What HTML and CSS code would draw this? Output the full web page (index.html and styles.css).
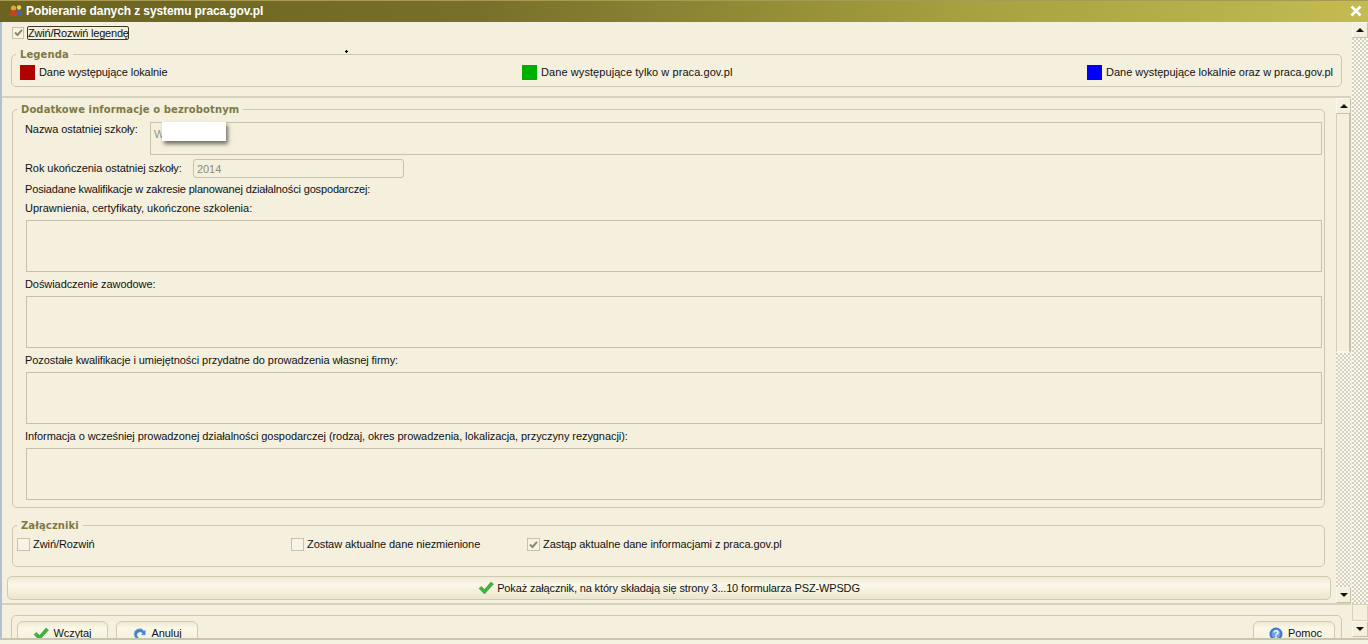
FILE: index.html
```html
<!DOCTYPE html>
<html lang="pl">
<head>
<meta charset="utf-8">
<title>Pobieranie danych z systemu praca.gov.pl</title>
<link rel="stylesheet" href="styles.css">
</head>
<body>
<div class="window">
  <header class="titlebar">
    <svg class="app-icon" width="14" height="14" viewBox="0 0 14 14"><circle cx="4.500" cy="4" r="2.600" fill="#e8a23a"/><path d="M1 12c0-4 1-5.500 3.500-5.500S8.500 8 8.500 12z" fill="#c8401c"/><circle cx="10" cy="3.500" r="2.200" fill="#f0c84a"/><path d="M7.500 12c0-4 .8-6 2.800-6S13 8 13 12z" fill="#4a62a8"/></svg>
    <span class="title">Pobieranie danych z systemu praca.gov.pl</span>
    <svg class="close" width="12" height="12" viewBox="0 0 12 12"><path d="M1.500 1.500l9 9M10.500 1.500l-9 9" stroke="#fff" stroke-width="2.600"/></svg>
  </header>
  <div class="frame">
    <main class="content">
      <div class="toggle-row">
        <span class="check on"><svg width="9" height="9" viewBox="0 0 9 9"><path d="M1 4.500l2.500 2.500L8 1.800" fill="none" stroke="#8c8a5e" stroke-width="2"/></svg></span>
        <span class="focus-label">Zwiń/Rozwiń legendę</span>
      </div>
      <fieldset class="group legend-box">
        <legend>Legenda</legend>
        <div class="legend-items">
          <span class="legend-item"><i class="swatch red"></i>Dane występujące lokalnie</span>
          <span class="legend-item wide"><i class="swatch green"></i>Dane występujące tylko w praca.gov.pl</span>
          <span class="legend-item semi"><i class="swatch blue"></i>Dane występujące lokalnie oraz w praca.gov.pl</span>
        </div>
      </fieldset>
      <section class="panel">
        <div class="panel-body">
          <fieldset class="group info">
            <legend>Dodatkowe informacje o bezrobotnym</legend>
            <div class="school-row">
              <label class="school-label">Nazwa ostatniej szkoły:</label>
              <div class="field school"><span class="ghost">W</span><span class="redact"></span></div>
            </div>
            <div class="year-row">
              <label>Rok ukończenia ostatniej szkoły:</label>
              <div class="field year">2014</div>
            </div>
            <p class="line first">Posiadane kwalifikacje w zakresie planowanej działalności gospodarczej:</p>
            <p class="line second">Uprawnienia, certyfikaty, ukończone szkolenia:</p>
            <div class="field area"></div>
            <p class="line">Doświadczenie zawodowe:</p>
            <div class="field area"></div>
            <p class="line">Pozostałe kwalifikacje i umiejętności przydatne do prowadzenia własnej firmy:</p>
            <div class="field area"></div>
            <p class="line">Informacja o wcześniej prowadzonej działalności gospodarczej (rodzaj, okres prowadzenia, lokalizacja, przyczyny rezygnacji):</p>
            <div class="field area"></div>
          </fieldset>
          <fieldset class="group attach">
            <legend>Załączniki</legend>
            <div class="attach-row">
              <span class="opt o1"><span class="check"></span>Zwiń/Rozwiń</span>
              <span class="opt o2"><span class="check"></span>Zostaw aktualne dane niezmienione</span>
              <span class="opt"><span class="check on"><svg width="9" height="9" viewBox="0 0 9 9"><path d="M1 4.500l2.500 2.500L8 1.800" fill="none" stroke="#8c8a5e" stroke-width="2"/></svg></span>Zastąp aktualne dane informacjami z praca.gov.pl</span>
            </div>
          </fieldset>
          <div class="showbar">
            <svg width="16" height="14" viewBox="0 0 16 14"><path d="M1 7.500l2.500-2 3 3L13 1l2.500 2-9 10z" fill="#3fb53a" stroke="#2c8f2c" stroke-width=".5"/></svg>
            <span>Pokaż załącznik, na który składają się strony 3...10 formularza PSZ-WPSDG</span>
          </div>
        </div>
        <div class="scroll inner">
          <div class="sbtn"><i class="up"></i></div>
          <div class="thumb"></div>
          <div class="track"></div>
          <div class="sbtn"><i class="down"></i></div>
        </div>
      </section>
      <fieldset class="group buttons">
        <button class="btn b1"><svg width="16" height="14" viewBox="0 0 16 14"><path d="M1 7.500l2.500-2 3 3L13 1l2.500 2-9 10z" fill="#3fb53a" stroke="#2c8f2c" stroke-width=".5"/></svg>Wczytaj</button>
        <button class="btn b2"><svg width="15" height="14" viewBox="0 0 15 14"><path d="M2 7a5.500 5.500 0 0 1 10-3l1.500-1v5H9l1.500-1.500A3 3 0 0 0 5 8l2 4C4 12 2 10 2 7z" fill="#3f82d0" stroke="#a8c4e8" stroke-width=".6"/></svg>Anuluj</button>
        <span class="spacer"></span>
        <button class="btn b3"><svg width="14" height="14" viewBox="0 0 14 14"><circle cx="7" cy="7" r="6.500" fill="#3b78c8"/><circle cx="7" cy="7" r="4.500" fill="#6fa3e0"/><text x="7" y="10.500" text-anchor="middle" font-size="10" font-weight="700" fill="#fff" font-family="Liberation Sans">?</text></svg>Pomoc</button>
      </fieldset>
    </main>
    <aside class="scroll outer">
      <div class="sbtn"><i class="up"></i></div>
      <div class="track"></div>
      <div class="thumb"></div>
      <div class="sbtn"><i class="down"></i></div>
    </aside>
  </div>
  <footer class="base"></footer>
  <i class="speck"></i>
</div>
</body>
</html>
```

FILE: styles.css
```css
* { box-sizing: border-box; }
html, body { margin: 0; height: 100%; overflow: hidden; }
body { background: #f5f0dd; font: 11px/13px "Liberation Sans", Arial, sans-serif; letter-spacing: -.07px; color: #111; }
.window { position: relative; width: 1368px; height: 644px; display: flex; flex-direction: column; overflow: hidden; }

.titlebar { flex: 0 0 22px; display: flex; align-items: center; padding: 0 6px 1px 9px; border-top: 1px solid #a89a50; background: linear-gradient(90deg, #6b6420 0%, #77702a 35%, #a6a03f 70%, #c2bc52 100%); color: #fff; }
.app-icon { margin-right: 3px; }
.title { flex: 1; font: 700 12px/15px "Liberation Sans", sans-serif; letter-spacing: -.1px; }

.frame { flex: 0 0 616px; display: flex; border-left: 2px solid #afc0d2; overflow: hidden; }
.content { flex: 1; min-width: 0; display: flex; flex-direction: column; overflow: hidden; }

.toggle-row { height: 19px; display: flex; align-items: center; padding: 2px 0 0 10px; flex: none; }
.check { width: 12px; height: 12px; flex: none; display: inline-flex; align-items: center; justify-content: center; background: #f7f4e7; border: 1px solid #c5c2ae; }
.focus-label { margin-left: 3px; padding: 0; border: 1px solid #3c3a20; border-radius: 2px; line-height: 12px; height: 14px; width: 102px; white-space: nowrap; letter-spacing: -.2px; }

fieldset.group { margin: 0; padding: 0; min-width: 0; border: 1px solid #cdc9b0; border-radius: 5px; }
legend { padding: 0 4px; margin-left: 4px; color: #7d7a47; font: 700 10px/13px "DejaVu Sans", sans-serif; letter-spacing: .1px; }

.legend-box { flex: none; height: 39px; margin: 7px 9px 0 9px !important; }
.legend-items { display: flex; justify-content: space-between; padding: 4px 8px 0 8px; }
.legend-item { display: flex; align-items: center; height: 15px; }
.legend-item.wide { letter-spacing: .07px; }
.legend-item.semi { letter-spacing: -.02px; }
.swatch { width: 15px; height: 15px; margin-right: 4px; }
.red { background: #b00000; }
.green { background: #00b000; }
.blue { background: #0000ff; }

.panel { flex: 0 0 509px; margin-top: 9px; display: flex; border-top: 2px solid #d6d2bb; border-bottom: 2px solid #d6d2bb; }
.panel-body { flex: 1; min-width: 0; display: flex; flex-direction: column; padding-top: 5px; }

.info { height: 405px; margin: 0 11px 0 10px !important; padding: 0 2px 0 12px !important; flex: none; }
.info legend { margin-left: -8px; }
.school-row { display: flex; height: 33px; margin-top: 6px; }
.school-label { padding-top: 1px; width: 125px; flex: none; }
.field { background: #f5f0dd; border: 1px solid #c6c3ac; color: #8f8c78; }
.school { flex: 1; position: relative; padding: 5px 3px; }
.ghost { color: #9a9784; }
.redact { position: absolute; left: 11px; top: -1px; width: 64px; height: 19px; background: #fff; box-shadow: 2px 3px 4px rgba(40,40,30,.65); }
.year-row { display: flex; align-items: center; height: 19px; margin-top: 4px; }
.year-row label { width: 168px; flex: none; }
.year { width: 211px; height: 19px; border-radius: 3px; padding: 3px; }
.line { margin: 6px 0 0 0; height: 13px; white-space: nowrap; }
.line.first { margin-top: 5px; letter-spacing: -.15px; }
.line.second { margin-top: 6px; letter-spacing: 0; }
.area { height: 52px; margin: 5px 0 0 1px; }

.attach { height: 48px; margin: 11px 11px 0 10px !important; padding: 0 !important; flex: none; }
.attach-row { display: flex; align-items: center; padding: 6px 0 0 4px; }
.opt { display: inline-flex; align-items: center; white-space: nowrap; }
.opt .check { margin-right: 3px; width: 13px; height: 13px; }
.o1 { width: 274px; }
.o2 { width: 236px; }

.showbar { flex: none; height: 24px; margin: 9px 5px 0 5px; display: flex; align-items: center; justify-content: center; gap: 3px; letter-spacing: -.14px; border: 1px solid #cfcbb2; border-radius: 5px; background: linear-gradient(#efe9cf, #fbf8ea 35%, #f3eed8 70%, #ece6cc); }

.scroll { display: flex; flex-direction: column; flex: none; background: #f5f0dd; }
.scroll.inner { width: 15px; }
.scroll.outer { width: 16px; margin-top: 0; height: 615px; margin-left: 1px; }
.sbtn { flex: none; height: 16px; display: flex; align-items: center; justify-content: center; background: #f5f0dd; border: 1px solid #fbf9ef; border-right-color: #c6c2aa; border-bottom-color: #c6c2aa; }
.sbtn i { width: 0; height: 0; border-left: 4px solid transparent; border-right: 4px solid transparent; }
.up { border-bottom: 4px solid #111; }
.down { border-top: 4px solid #111; }
.track { flex: 1; background-color: #fbf9f1; background-image: radial-gradient(circle at 1px 1px, #d3d0bc .9px, transparent 1px), radial-gradient(circle at 1px 1px, #d3d0bc .9px, transparent 1px); background-size: 4px 4px; background-position: 0 0, 2px 2px; }
.inner .thumb { flex: 0 0 239px; background: #f5f0dd; border-left: 1px solid #d2cfb8; border-right: 2px solid #c6c2aa; border-bottom: 2px solid #fbf9ef; }
.outer .thumb { flex: 0 0 17px; background: #f5f0dd; border: 1px solid #d6d2bb; }

.buttons { flex: none; height: 40px; margin: 10px 9px 0 9px !important; padding: 5px 6px 0 5px !important; display: flex; align-items: flex-start; gap: 8px; }
.btn { height: 24px; display: inline-flex; align-items: flex-start; justify-content: center; gap: 4px; padding: 5px 0 0; font: 11px/13px "Liberation Sans", Arial, sans-serif; letter-spacing: -.07px; color: #111; border: 1px solid #cfcbb2; border-radius: 6px; background: linear-gradient(#efe9cf, #fbf8ea 30%, #f3eed8); }
.b1 { width: 91px; }
.b2 { width: 82px; }
.b3 { width: 82px; padding-left: 3px; gap: 5px; }
.spacer { flex: 1; }

.base { position: absolute; left: 0; right: 0; bottom: 0; height: 6px; background: #f5f2e2; border-top: 2px solid #c8c5ae; }
.speck { position: absolute; left: 345px; top: 50px; width: 3px; height: 3px; background: radial-gradient(#000 1px, transparent 1.500px); }
```
